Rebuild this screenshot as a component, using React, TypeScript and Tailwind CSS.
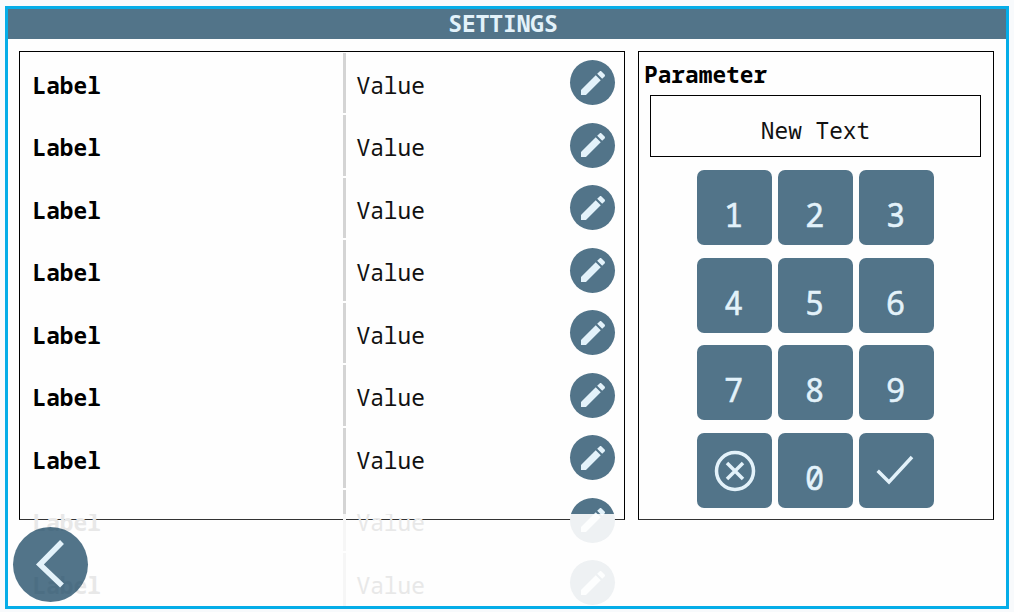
const mono = "font-['Noto_Sans_Mono','DejaVu_Sans_Mono',monospace]";

function Pencil({ color }: { color: string }) {
  return (
    <svg width="32" height="32" viewBox="0 0 24 24" fill={color}>
      <path d="M3 17.25V21h3.75L17.81 9.94l-3.75-3.75L3 17.25zM20.71 7.04c.39-.39.39-1.02 0-1.41l-2.34-2.34c-.39-.39-1.02-.39-1.41 0l-1.83 1.83 3.75 3.75 1.83-1.83z" />
    </svg>
  );
}

function Row({ faded, blank }: { faded?: boolean; blank?: boolean }) {
  return (
    <div className="flex h-[62.5px] items-center">
      <div className={`w-[323px] pl-[12.5px] pt-[7px] font-bold ${faded ? "text-[#e8e8e8]" : "text-black"}`}>{blank ? "" : "Label"}</div>
      <div className={`h-[60.5px] w-[2.5px] ${faded ? "bg-[#f6f6f6]" : "bg-[#d4d4d4]"}`} />
      <div className={`flex-1 pl-[11px] pt-[7px] ${faded ? "text-[#e8e8e8]" : "text-[#111]"}`}>{blank ? "" : "Value"}</div>
      <div className={`mr-[9px] flex h-[45px] w-[45px] items-center justify-center rounded-full ${faded ? "bg-[#eef1f3]" : "bg-[#527489]"}`}>
        <Pencil color={faded ? "#fdfefe" : "#e3f2fa"} />
      </div>
    </div>
  );
}

function Key({ children }: { children: React.ReactNode }) {
  return (
    <div className="flex h-[75px] w-[75px] items-center justify-center rounded-[7px] bg-[#527489] pr-[2px] pt-[15px] text-[32px] leading-none text-[#e3f2fa] [-webkit-text-stroke:0.5px_#e3f2fa]">
      {children}
    </div>
  );
}

function IconKey({ children }: { children: React.ReactNode }) {
  return <div className="h-[75px] w-[75px] rounded-[7px] bg-[#527489]">{children}</div>;
}

export default function App() {
  return (
    <div className={`h-[612px] w-[1014px] overflow-hidden bg-[#f8fafc] pl-[5px] pt-[6px] text-[22.8px] leading-none ${mono}`}>
      <div className="relative flex h-[603px] w-[1004px] flex-col border-[3px] border-[#05ade8] bg-[#fefefe]">
        <div className="flex h-[30px] items-center justify-center bg-[#527489] pr-[8px] pt-[1px] font-bold text-[#e3f2fa]">SETTINGS</div>
        <div className="flex gap-[13px] pl-[11px] pt-[12px]">
          <div className="relative h-[469px] w-[606px] border border-black border-b-[#333]">
            <div className="-mt-[0.5px] h-[462.5px] overflow-hidden">
              {[0, 1, 2, 3, 4, 5, 6].map((i) => (
                <Row key={i} />
              ))}
              <Row blank />
            </div>
            <div className="absolute left-0 right-0 top-[462px] h-[92px] overflow-hidden">
              <div className="-mt-[25px]">
                <Row faded />
                <Row faded />
              </div>
            </div>
          </div>
          <div className="h-[469px] w-[356px] border border-black border-b-[#333]">
            <div className="pl-[5px] pt-[12px] font-bold text-black">Parameter</div>
            <div className="ml-[11px] mt-[8px] flex h-[62px] w-[331px] items-center justify-center border border-black pt-[11px] text-[#111]">New Text</div>
            <div className="ml-[58px] mt-[13.6px] grid w-[237px] grid-cols-[75px_75px_75px] gap-x-[6px] gap-y-[12.5px]">
              {["1", "2", "3", "4", "5", "6", "7", "8", "9"].map((d) => (
                <Key key={d}>{d}</Key>
              ))}
              <IconKey>
                <svg width="75" height="75" viewBox="0 0 75 75" fill="none" stroke="#e3f2fa" strokeWidth="3.5">
                  <circle cx="38" cy="38" r="18.5" />
                  <path d="M30 30L46 46M46 30L30 46" />
                </svg>
              </IconKey>
              <Key>0</Key>
              <IconKey>
                <svg width="75" height="75" viewBox="0 0 75 75" fill="none" stroke="#e3f2fa" strokeWidth="3.5">
                  <path d="M18.7 37.7L30 49L53 24" />
                </svg>
              </IconKey>
            </div>
          </div>
        </div>
        <div className="absolute bottom-[4px] left-[5px] h-[75px] w-[75px] rounded-full bg-[#184662]/75">
          <svg width="75" height="75" viewBox="0 0 75 75" fill="none" stroke="#e3f2fa" strokeWidth="5.5">
            <path d="M49 15L26.9 37.5L49 58.6" />
          </svg>
        </div>
      </div>
    </div>
  );
}
